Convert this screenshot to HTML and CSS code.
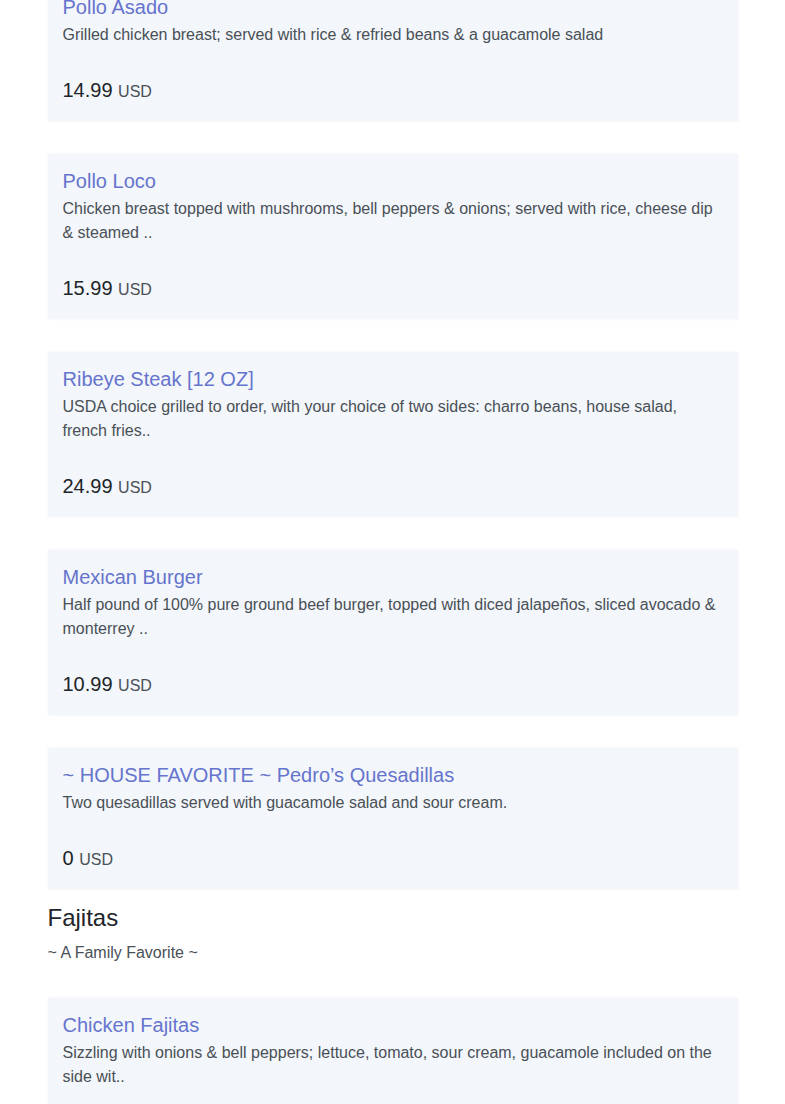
FILE: index.html
```html
<!DOCTYPE html>
<html lang="en">
<head>
    <meta charset="UTF-8">
    <title>Menu</title>
    <link rel="stylesheet" href="styles.css">
</head>
<body>
    <div class="container">
        <div class="menu-item first">
            <h5 class="item-name">Pollo Asado</h5>
            <p class="item-desc">Grilled chicken breast; served with rice &amp; refried beans &amp; a guacamole salad</p>
            <div class="item-price">14.99 <span class="currency">USD</span></div>
        </div>

        <div class="menu-item">
            <h5 class="item-name">Pollo Loco</h5>
            <p class="item-desc">Chicken breast topped with mushrooms, bell peppers &amp; onions; served with rice, cheese dip &amp; steamed ..</p>
            <div class="item-price">15.99 <span class="currency">USD</span></div>
        </div>

        <div class="menu-item">
            <h5 class="item-name">Ribeye Steak [12 OZ]</h5>
            <p class="item-desc">USDA choice grilled to order, with your choice of two sides: charro beans, house salad, french fries..</p>
            <div class="item-price">24.99 <span class="currency">USD</span></div>
        </div>

        <div class="menu-item">
            <h5 class="item-name">Mexican Burger</h5>
            <p class="item-desc">Half pound of 100% pure ground beef burger, topped with diced jalapeños, sliced avocado &amp; monterrey ..</p>
            <div class="item-price">10.99 <span class="currency">USD</span></div>
        </div>

        <div class="menu-item">
            <h5 class="item-name">~ HOUSE FAVORITE ~ Pedro’s Quesadillas</h5>
            <p class="item-desc">Two quesadillas served with guacamole salad and sour cream.</p>
            <div class="item-price">0 <span class="currency">USD</span></div>
        </div>

        <!-- Fajitas section -->
        <div class="section-head">
            <h4 class="section-title">Fajitas</h4>
            <p class="section-sub">~ A Family Favorite ~</p>
        </div>

        <div class="menu-item">
            <h5 class="item-name">Chicken Fajitas</h5>
            <p class="item-desc">Sizzling with onions &amp; bell peppers; lettuce, tomato, sour cream, guacamole included on the side wit..</p>
            <div class="item-price">12.99 <span class="currency">USD</span></div>
        </div>
    </div>
</body>
</html>
```

FILE: styles.css
```css
body {
    margin: 0;
    background: #fff;
    font-family: "Liberation Sans", Arial, sans-serif;
    color: #212529;
}

.container {
    width: 690px;
    margin: 0 auto;
    padding: 0 15px;
}

.menu-item {
    background-color: #f3f6fa;
    box-shadow: 0 0 3px rgba(0, 0, 0, 0.05);
    padding: 15px 15px 19px;
    margin-top: 33px;
}

.menu-item.first {
    margin-top: -20px;
}

.item-name {
    font-size: 20px;
    font-weight: normal;
    line-height: 24px;
    color: #6574cd;
    margin: 0 0 4px;
}

.item-desc {
    font-size: 16px;
    line-height: 24px;
    color: #495057;
    margin: 0 0 31px;
}

.item-price {
    font-size: 20px;
    line-height: 24px;
    color: #212529;
}

.currency {
    font-size: 16px;
    line-height: 1;
    color: #495057;
}

.section-head {
    margin-top: 14px;
}

.section-title {
    font-size: 24px;
    font-weight: normal;
    line-height: 29px;
    margin: 0 0 9px;
}

.section-sub {
    font-size: 16px;
    line-height: 24px;
    color: #495057;
    margin: 0;
}
```
